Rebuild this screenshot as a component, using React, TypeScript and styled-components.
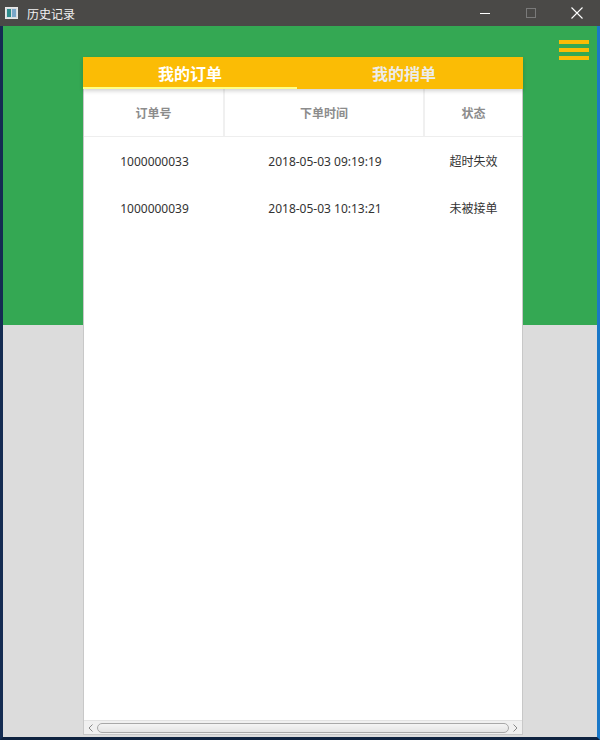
import React from "react";
import styled, { createGlobalStyle } from "styled-components";

const Global = createGlobalStyle`
  html, body { margin: 0; padding: 0; background: #0f2340; }
  * { box-sizing: border-box; }
`;

const Win = styled.div`
  width: 600px;
  height: 740px;
  display: flex;
  flex-direction: column;
  font-family: "Noto Sans", "Noto Sans CJK SC", sans-serif;
  background: #0f2340;
`;

const TitleBar = styled.div`
  height: 26px;
  background: #4a4947;
  display: flex;
  align-items: center;
  color: #f2f2f2;
  font-size: 12px;
  padding-left: 5px;
`;

const Title = styled.span`
  margin-left: 9px;
  font-family: "Noto Sans CJK SC", sans-serif;
`;

const Controls = styled.div`
  margin-left: auto;
  display: flex;
  height: 100%;
`;

const Ctrl = styled.div`
  width: 46px;
  height: 100%;
  display: flex;
  align-items: center;
  justify-content: center;
`;

const Frame = styled.div`
  flex: 1;
  display: flex;
  border-left: 3px solid #142c52;
  border-right: 3px solid #1a78c8;
  border-bottom: 3px solid #0f2340;
`;

const Content = styled.div`
  flex: 1;
  position: relative;
  background: linear-gradient(to bottom, #34a853 0, #34a853 299px, #dcdcdc 299px);
  padding: 31px 0 2px 80px;
  display: flex;
`;

const Menu = styled.div`
  position: absolute;
  right: 8px;
  top: 14px;
  width: 30px;
  display: flex;
  flex-direction: column;
  gap: 4px;
`;

const Bar = styled.div`
  height: 4px;
  background: #fbbc05;
`;

const Card = styled.div`
  width: 440px;
  display: flex;
  flex-direction: column;
  background: #fff;
  border-left: 1px solid #c8c8c8;
  border-right: 1px solid #c8c8c8;
  border-bottom: 1px solid #c8c8c8;
`;

const Tabs = styled.div`
  height: 32px;
  background: #fbbc05;
  display: flex;
  position: relative;
  margin: 0 -1px;
  box-shadow: 0 2px 4px rgba(0, 0, 0, 0.18);
  z-index: 1;
`;

const Tab = styled.div<{ $active?: boolean }>`
  width: 214px;
  display: flex;
  align-items: center;
  justify-content: center;
  font-family: "Noto Sans CJK SC", sans-serif;
  font-weight: 700;
  font-size: 16px;
  color: ${(p) => (p.$active ? "#ffffff" : "#ececec")};
  border-bottom: 2px solid ${(p) => (p.$active ? "#ffff86" : "transparent")};
  padding-top: 2px;
`;

const Row = styled.div<{ $head?: boolean }>`
  display: grid;
  grid-template-columns: 141px 200px 1fr;
  height: ${(p) => (p.$head ? "48px" : "47px")};
  border-bottom: ${(p) => (p.$head ? "1px solid #eeeeee" : "none")};
`;

const Cell = styled.div<{ $head?: boolean; $divider?: boolean }>`
  display: flex;
  align-items: center;
  justify-content: center;
  font-size: 12px;
  font-weight: ${(p) => (p.$head ? 700 : 400)};
  color: ${(p) => (p.$head ? "#8c8c8c" : "#333333")};
  border-right: ${(p) => (p.$divider ? "2px solid #f0f0f0" : "none")};
  padding-top: ${(p) => (p.$head ? "0" : "1px")};
`;

const Spacer = styled.div`
  flex: 1;
`;

const ScrollBar = styled.div`
  height: 14px;
  display: flex;
  align-items: center;
  background: #f0f0f0;
  border-top: 1px solid #e2e2e2;
  padding: 0 2px;
  gap: 2px;
`;

const Arrow = styled.span`
  width: 9px;
  display: flex;
  justify-content: center;
`;

const Thumb = styled.div`
  flex: 1;
  height: 10px;
  border: 1px solid #a8a8a8;
  border-radius: 5px;
  background: linear-gradient(#f4f4f4, #e4e4e4);
`;

const rows = [
  ["1000000033", "2018-05-03 09:19:19", "超时失效"],
  ["1000000039", "2018-05-03 10:13:21", "未被接单"],
];

export default function App() {
  return (
    <Win>
      <Global />
      <TitleBar>
        <svg width="13" height="12" viewBox="0 0 13 12">
          <rect x="0.5" y="0.5" width="12" height="11" fill="#d8dde2" stroke="#e8e8e8" />
          <rect x="2" y="2" width="4" height="8" fill="#2e8b8b" />
          <rect x="7" y="2" width="4" height="8" fill="#7aa6c8" />
        </svg>
        <Title>历史记录</Title>
        <Controls>
          <Ctrl>
            <svg width="10" height="10" viewBox="0 0 10 10">
              <rect x="0" y="5" width="10" height="1" fill="#fff" />
            </svg>
          </Ctrl>
          <Ctrl>
            <svg width="10" height="10" viewBox="0 0 10 10">
              <rect x="0.5" y="0.5" width="9" height="9" fill="none" stroke="#7a7a7a" />
            </svg>
          </Ctrl>
          <Ctrl>
            <svg width="12" height="12" viewBox="0 0 12 12">
              <path d="M0.5 0.5 L11.5 11.5 M11.5 0.5 L0.5 11.5" stroke="#fff" strokeWidth="1.1" />
            </svg>
          </Ctrl>
        </Controls>
      </TitleBar>
      <Frame>
        <Content>
          <Menu>
            <Bar />
            <Bar />
            <Bar />
          </Menu>
          <Card>
            <Tabs>
              <Tab $active>我的订单</Tab>
              <Tab>我的捎单</Tab>
            </Tabs>
            <Row $head>
              <Cell $head $divider>订单号</Cell>
              <Cell $head $divider>下单时间</Cell>
              <Cell $head>状态</Cell>
            </Row>
            {rows.map((r) => (
              <Row key={r[0]}>
                <Cell>{r[0]}</Cell>
                <Cell>{r[1]}</Cell>
                <Cell>{r[2]}</Cell>
              </Row>
            ))}
            <Spacer />
            <ScrollBar>
              <Arrow>
                <svg width="5" height="8" viewBox="0 0 5 8">
                  <path d="M4.5 0.5 L1 4 L4.5 7.5" fill="none" stroke="#8a8a8a" strokeWidth="1" />
                </svg>
              </Arrow>
              <Thumb />
              <Arrow>
                <svg width="5" height="8" viewBox="0 0 5 8">
                  <path d="M0.5 0.5 L4 4 L0.5 7.5" fill="none" stroke="#8a8a8a" strokeWidth="1" />
                </svg>
              </Arrow>
            </ScrollBar>
          </Card>
        </Content>
      </Frame>
    </Win>
  );
}
